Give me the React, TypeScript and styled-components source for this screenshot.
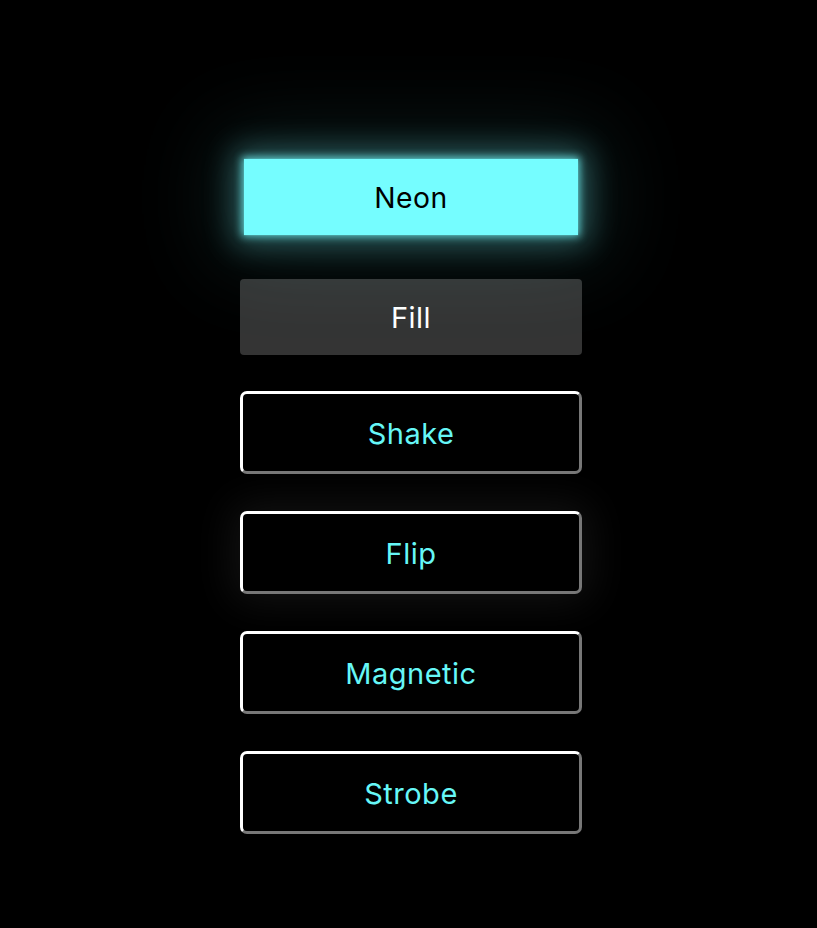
import React from "react";
import styled, { createGlobalStyle, css } from "styled-components";

const Global = createGlobalStyle`
  html, body { margin: 0; padding: 0; background: #000; }
  body { font-family: Inter, "Liberation Sans", Arial, sans-serif; }
`;

const Page = styled.div`
  min-height: 928px;
  background: #000;
  display: flex;
  flex-direction: column;
  align-items: center;
  padding: 158px 0 0 5px;
  box-sizing: border-box;
  gap: 37px;
`;

type Variant = "neon" | "fill" | "outline";

const Button = styled.button<{ $variant: Variant; $glow?: boolean }>`
  width: 342px;
  box-sizing: border-box;
  font-family: Inter, "Liberation Sans", Arial, sans-serif;
  font-size: 29px;
  letter-spacing: 0.5px;
  line-height: 34px;
  padding: 2px 0 0;
  cursor: pointer;
  display: flex;
  align-items: center;
  justify-content: center;
  ${(p) =>
    p.$variant === "neon" &&
    css`
      height: 78px;
      background: #75fdff;
      color: #000;
      border: none;
      border-radius: 0;
      transform: scale(0.977);
      margin-bottom: 6px;
      box-shadow: 0 0 8px 2px rgba(117, 253, 255, 0.7),
        0 0 30px 10px rgba(117, 253, 255, 0.32),
        0 0 90px 28px rgba(117, 253, 255, 0.1);
    `}
  ${(p) =>
    p.$variant === "fill" &&
    css`
      height: 76px;
      background: #343434;
      color: #fff;
      border: none;
      border-radius: 4px;
      margin-bottom: -1px;
    `}
  ${(p) =>
    p.$variant === "outline" &&
    css`
      height: 83px;
      background: #000;
      color: #66f7f7;
      border: 3px solid;
      border-color: #fff #777 #777 #fff;
      border-radius: 7px;
    `}
  ${(p) =>
    p.$glow &&
    css`
      box-shadow: 0 0 40px 8px rgba(255, 255, 255, 0.07);
    `}
`;

export default function App() {
  return (
    <>
      <Global />
      <Page>
        <Button $variant="neon">Neon</Button>
        <Button $variant="fill">Fill</Button>
        <Button $variant="outline">Shake</Button>
        <Button $variant="outline" $glow>
          Flip
        </Button>
        <Button $variant="outline">Magnetic</Button>
        <Button $variant="outline">Strobe</Button>
      </Page>
    </>
  );
}
